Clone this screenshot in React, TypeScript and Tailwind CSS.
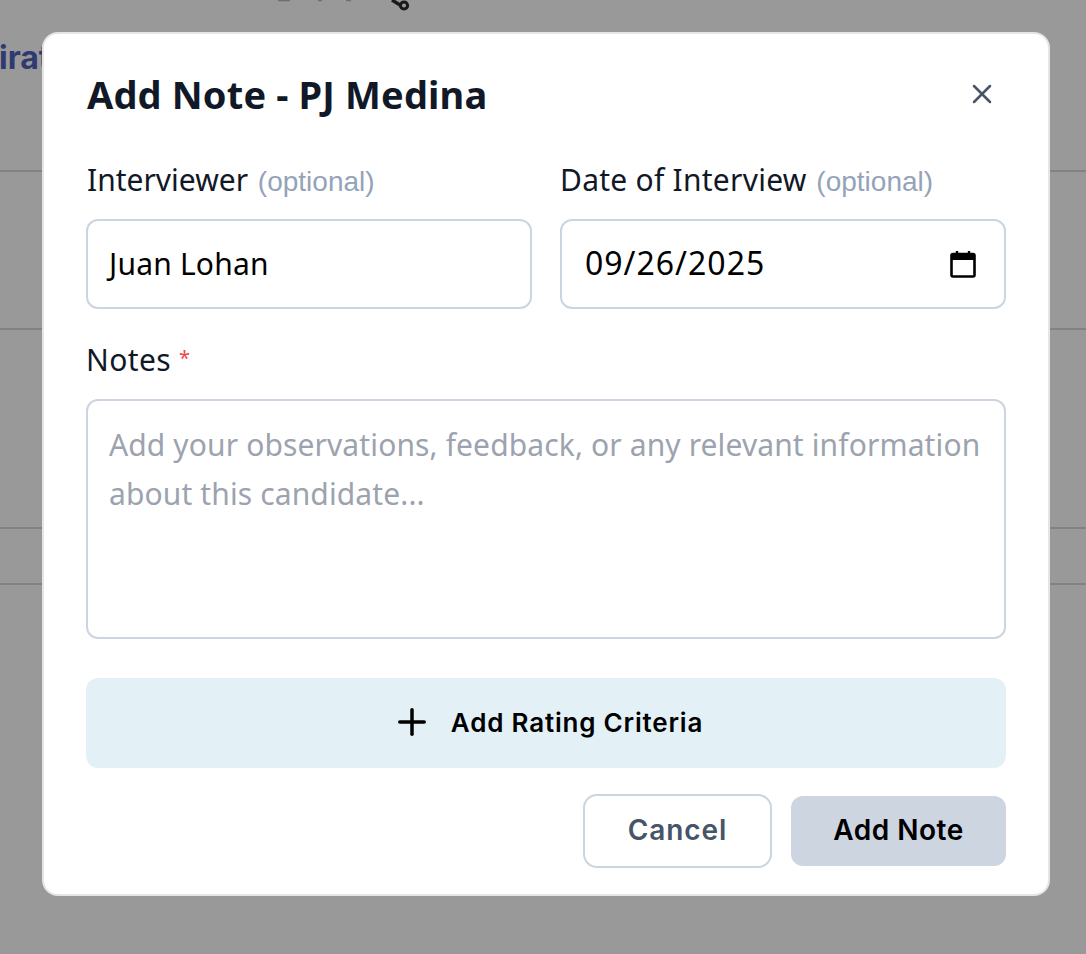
import { X, Plus } from "lucide-react";

function Row({ h }: { h: string }) {
  return <div className={`${h} border-b-2 border-[#828282]`} />;
}

export default function App() {
  return (
    <div className="relative h-[954px] w-[1086px] overflow-hidden bg-[#999999] font-['Noto_Sans',sans-serif]">
      {/* dimmed page behind the dialog */}
      <div className="flex flex-col">
        <Row h="h-[172px]" />
        <Row h="h-[158px]" />
        <Row h="h-[199px]" />
        <Row h="h-[56px]" />
      </div>
      <span className="absolute left-[-1px] top-[40px] font-['Inter',sans-serif] text-[32px] font-bold leading-[36px] text-[#2f3a70]">
        irat
      </span>
      <svg className="absolute left-[270px] top-0 h-[14px] w-[150px] text-[#1a1a1a]" viewBox="0 0 150 14" fill="none" stroke="currentColor">
        <path d="M8 0.5h12M48 0.5h4M76 0.5h5" stroke="#6f6f6f" strokeWidth="1.5" />
        <path d="M122 0 L130 5" strokeWidth="3.4" />
        <circle cx="134" cy="5.5" r="3.6" strokeWidth="3" />
      </svg>

      {/* dialog */}
      <div className="absolute left-[42px] top-[32px] flex h-[864px] w-[1008px] flex-col rounded-[16px] border-2 border-[#e5e5e5] bg-white px-[42px] pt-[38px]">
        <div className="flex items-center justify-between">
          <h2 className="ml-px mt-[-2px] mb-[2px] text-[38px] font-bold leading-[48px] tracking-[0.15px] text-[#111827]">Add Note - PJ Medina</h2>
          <button className="mr-[8px] mt-[-4px] text-[#475569]">
            <X size={32} strokeWidth={1.9} />
          </button>
        </div>

        <div className="mt-[42px] grid grid-cols-[446px_446px] gap-x-[28px]">
          <div>
            <label className="block text-[30px] leading-[36px] text-[#111827]">
              <span className="ml-px">Interviewer</span> <span className="ml-[2px] font-['Liberation_Sans',sans-serif] text-[28px] text-[#94a3b8]">(optional)</span>
            </label>
            <div className="mt-[19px] flex h-[90px] items-center rounded-[12px] border-2 border-[#cbd5e1] px-[21px] pb-[2px] text-[30px] tracking-[0.2px] text-black">
              Juan Lohan
            </div>
          </div>
          <div>
            <label className="block text-[30px] leading-[36px] text-[#111827]">
              <span className="tracking-[0.25px]">Date of Interview</span> <span className="ml-[2px] font-['Liberation_Sans',sans-serif] text-[28px] text-[#94a3b8]">(optional)</span>
            </label>
            <div className="mt-[19px] flex h-[90px] items-center justify-between rounded-[12px] border-2 border-[#cbd5e1] pl-[23px] pr-[28px] text-[32px] tracking-[1px] text-black">
              <span className="mt-[-3px]">09/26/2025</span>
              <svg width="26" height="28" viewBox="0 0 26 28" fill="none">
                <path d="M7 1v4M19 1v4" stroke="black" strokeWidth="2.4" />
                <rect x="1.5" y="4" width="23" height="22.5" rx="1.5" stroke="black" strokeWidth="2.6" />
                <rect x="1.5" y="4" width="23" height="6" fill="black" />
              </svg>
            </div>
          </div>
        </div>

        <label className="mt-[33px] block text-[30px] leading-[36px] text-[#111827]">
          <span className="tracking-[0.4px]">Notes</span> <span className="align-[6px] text-[20px] leading-none text-[#ef4444]">*</span>
        </label>
        <div className="mt-[21px] h-[240px] rounded-[12px] border-2 border-[#cbd5e1] px-[21px] pt-[19px] text-[30px] leading-[49px] tracking-[0.12px] text-[#9ca3af]">
          Add your observations, feedback, or any relevant information about this candidate...
        </div>

        <button className="mt-[39px] flex h-[90px] items-center justify-center gap-[18px] rounded-[12px] bg-[#e3f1f7] pb-[2px] pl-[2px] text-black">
          <Plus size={42} strokeWidth={2} />
          <span className="font-['Inter',sans-serif] text-[26px] font-semibold tracking-[0.8px]">Add Rating Criteria</span>
        </button>

        <div className="mt-[26px] flex items-center justify-end gap-[19px] font-['Inter',sans-serif] text-[28px] font-semibold">
          <button className="h-[74px] w-[189px] rounded-[14px] border-2 border-[#cbd5e1] bg-white pb-[2px] tracking-[0.9px] text-[#475569]">Cancel</button>
          <button className="h-[70px] w-[215px] rounded-[12px] bg-[#cdd5e0] pb-[2px] tracking-[0.5px] text-black">Add Note</button>
        </div>
      </div>
    </div>
  );
}
